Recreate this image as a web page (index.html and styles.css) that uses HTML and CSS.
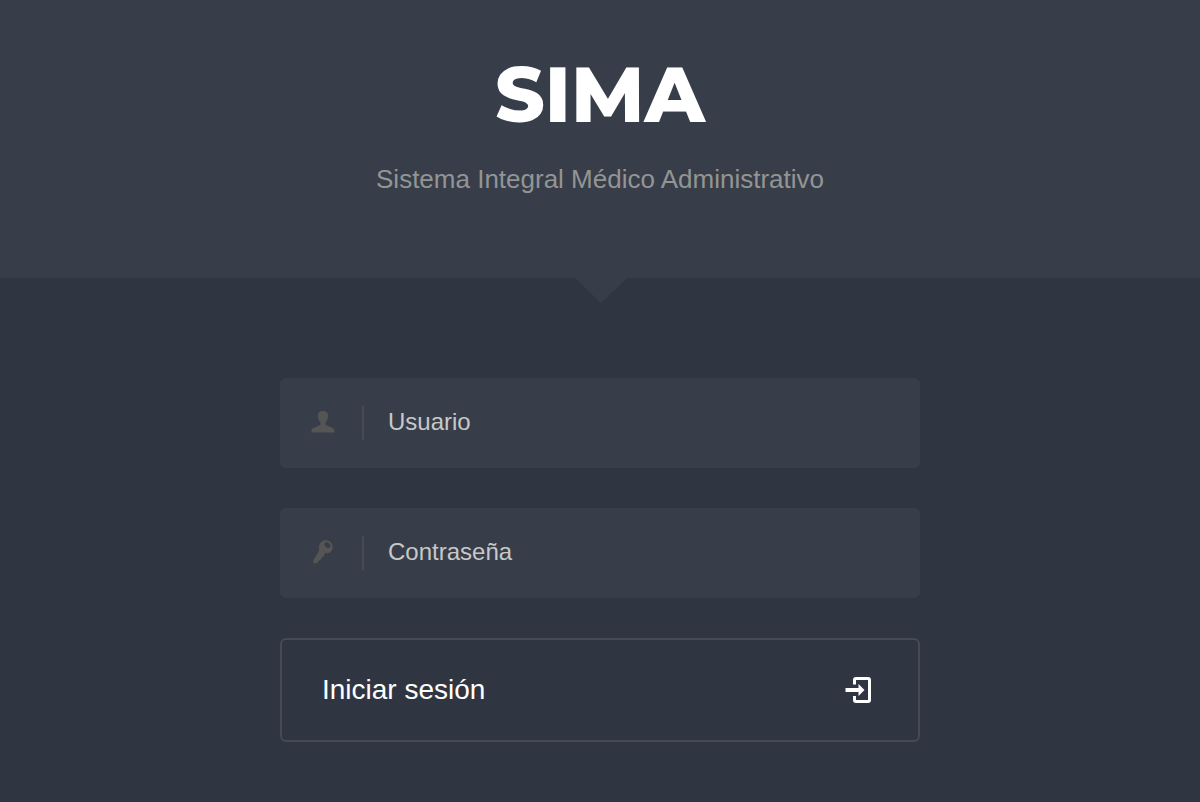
FILE: index.html
```html
<!DOCTYPE html>
<html lang="es">
<head>
  <meta charset="utf-8">
  <meta name="viewport" content="width=device-width, initial-scale=1">
  <title>SIMA</title>
  <link rel="stylesheet" href="styles.css">
</head>
<body class="login-page">

  <header class="login-header">
    <h1 class="logo">SIMA</h1>
    <p class="description">Sistema Integral Médico Administrativo</p>
  </header>

  <main class="login-content">
    <form class="login-form" method="post">
      <div class="input-group">
        <label class="addon" for="username" aria-label="Usuario">
          <svg width="24" height="24" viewBox="0 0 24 24" fill="currentColor" aria-hidden="true">
            <path d="M12 1C8.500 1 7 2.500 7 5.500C7 9 8 11 9.500 12.500V14C9.500 15 8.500 15.600 6 16.500L2.500 18C1 18.700 .5 19.500 .5 21.200V22.500H23.500V21.200C23.500 19.500 23 18.700 21.500 18L18 16.500C15.500 15.600 14.500 15 14.500 14V12.500C16 11 17 9 17 5.500C17 2.500 15.500 1 12 1Z"/>
          </svg>
        </label>
        <input type="text" class="form-control" id="username" name="username" placeholder="Usuario" autocomplete="off">
      </div>

      <div class="input-group">
        <label class="addon" for="password" aria-label="Contraseña">
          <svg width="24" height="24" viewBox="0 0 24 24" fill="currentColor" fill-rule="evenodd" aria-hidden="true">
            <path d="M10.500 1.800C12.800-.3 17-.3 19.500 2C22 4.300 22.400 8.800 20.100 11.400C18.700 13 16.500 13.400 14.600 13L13.200 14.400L12.800 16.400L10.900 17.200L10.200 19.200L8.600 20L6.600 22.600C5.600 23.800 4 23.800 3 23.200C2 22.500 2 20.800 2.800 19.600L8.300 10.400C7.300 7.300 8 4 10.500 1.800ZM14.200 2.700C13 3.500 13 5.300 14.500 6.800C16 8.200 17.800 8.500 18.800 7.500C19.800 6.400 19.400 4.600 18 3.300C16.800 2.200 15.200 1.900 14.200 2.700Z"/>
          </svg>
        </label>
        <input type="password" class="form-control" id="password" name="password" placeholder="Contraseña" autocomplete="off">
      </div>

      <button type="submit" class="btn-login">
        Iniciar sesión
        <svg width="28" height="28" viewBox="0 0 28 28" aria-hidden="true">
          <path d="M9.500 8.500V4Q9.500 2.500 11 2.500H23Q24.500 2.500 24.500 4V24Q24.500 25.500 23 25.500H11Q9.500 25.500 9.500 24V20" fill="none" stroke="currentColor" stroke-width="3"/>
          <path d="M.5 12H13.500V8L19.500 14L13.500 20V16H.5Z" fill="currentColor"/>
        </svg>
      </button>
    </form>
  </main>

</body>
</html>
```

FILE: styles.css
```css
* {
  box-sizing: border-box;
}
body {
  margin: 0;
  font-family: "Liberation Sans", Helvetica, Arial, sans-serif;
}
.login-page {
  min-height: 100vh;
  background: #303641;
  color: #949494;
}

/* header */
.login-header {
  position: relative;
  padding: 48px 20px 80px;
  background: #373e4a;
  text-align: center;
}
.login-header::after {
  content: "";
  position: absolute;
  top: 100%;
  left: 50%;
  margin-left: -25px;
  border: 26px solid transparent;
  border-top: 25px solid #373e4a;
  border-bottom: 0;
}
.logo {
  margin: 0;
  color: #fff;
  font-family: Montserrat, Lato, sans-serif;
  font-size: 77px;
  font-weight: 800;
  line-height: 92px;
}
.description {
  margin: 20px 0 0;
  font-size: 26px;
  line-height: 38px;
}

/* form */
.login-content {
  padding: 100px 20px 60px;
}
.login-form {
  display: flex;
  flex-direction: column;
  gap: 40px;
  max-width: 640px;
  margin: 0 auto;
}
.input-group {
  display: flex;
  align-items: center;
  height: 90px;
  background: #373e4a;
  border-radius: 6px;
}
.addon {
  display: flex;
  align-items: center;
  height: 34px;
  padding: 0 27px 2px 31px;
  border-right: 2px solid #454a54;
  color: #555;
}
.form-control {
  flex: 1;
  min-width: 0;
  height: 88px;
  padding: 0 24px 2px;
  border: 0;
  outline: 0;
  background: transparent;
  color: #fff;
  font-family: inherit;
  font-size: 24px;
}
.form-control::placeholder {
  color: #c8c8c8;
  opacity: 1;
}
.btn-login {
  display: flex;
  align-items: center;
  justify-content: space-between;
  height: 104px;
  padding: 0 45px 0 40px;
  border: 2px solid #454a54;
  border-radius: 6px;
  background: transparent;
  color: #fff;
  font-family: inherit;
  font-size: 28px;
  cursor: pointer;
}
.btn-login:hover {
  background: #373e4a;
}
```
